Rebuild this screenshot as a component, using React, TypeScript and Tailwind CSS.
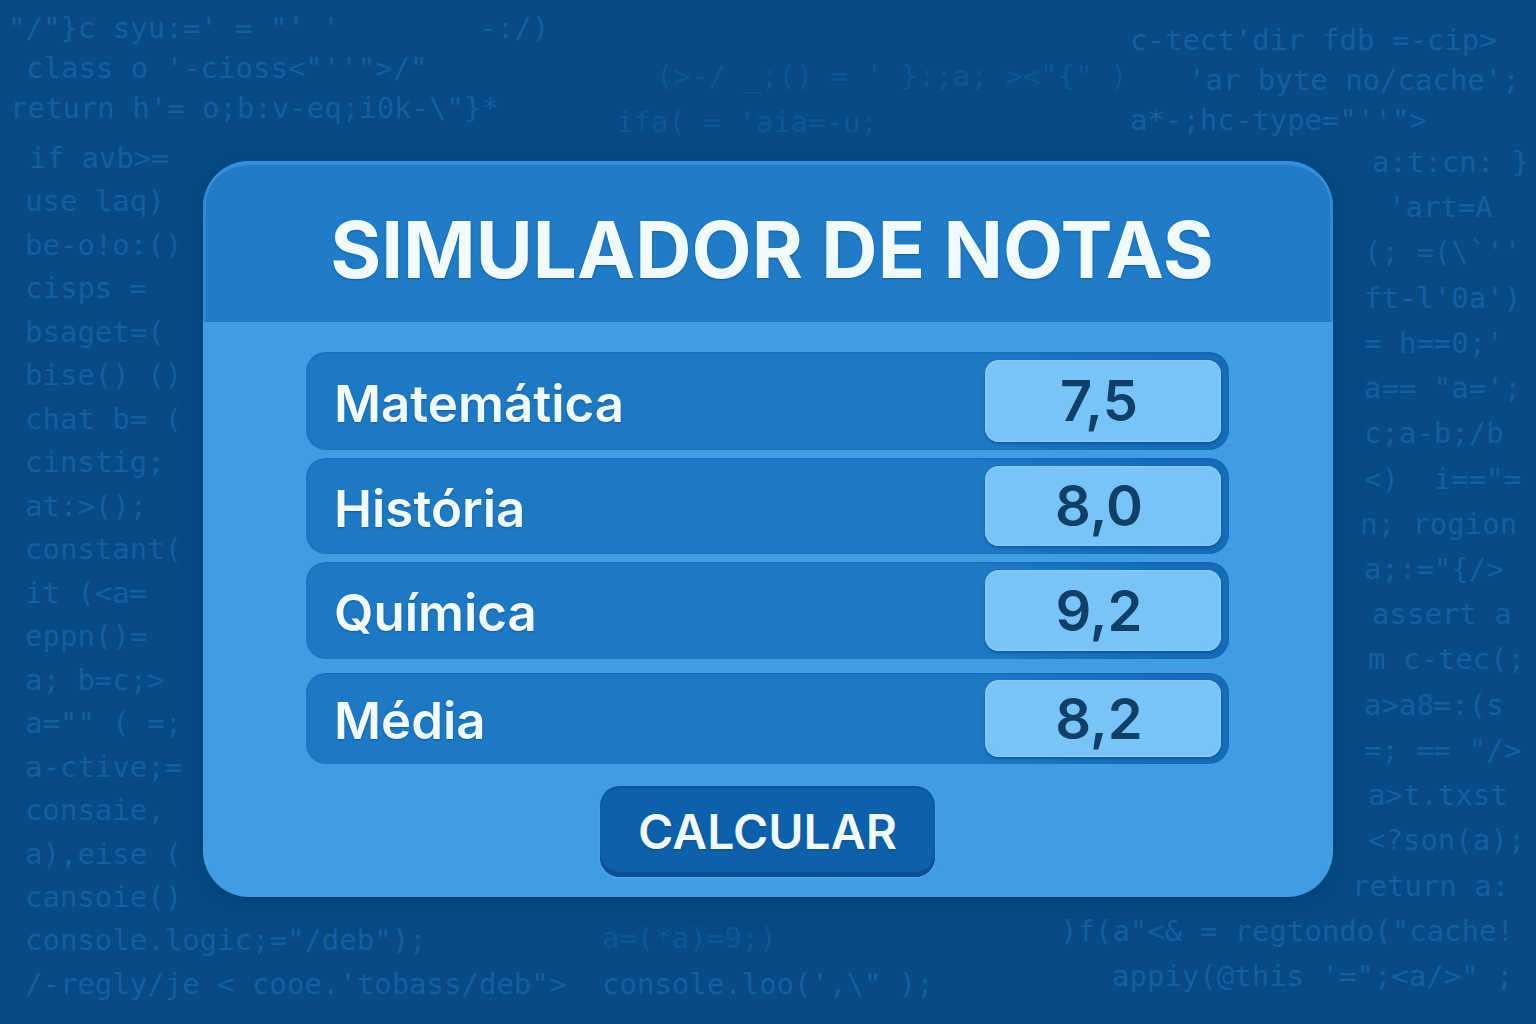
import { useState } from "react";

type Line = { text: string; className?: string };

const topLeft: Line[] = [
  { text: `"/"}c syu:=' = "' '        -:/)`, className: "pl-2" },
  { text: `class o '-cioss<"''">/"`, className: "pl-[26px]" },
  { text: `return h'= o;b:v-eq;i0k-\\"}*`, className: "pl-2.5" },
];

const left: Line[] = [
  { text: "if avb>=", className: "pl-1" },
  { text: "use laq)" },
  { text: "be-o!o:()" },
  { text: "cisps =" },
  { text: "bsaget=(" },
  { text: "bise() ()" },
  { text: "chat b= (" },
  { text: "cinstig;" },
  { text: "at:>();" },
  { text: "constant(" },
  { text: "it (<a=" },
  { text: "eppn()=" },
  { text: "a; b=c;>" },
  { text: `a="" ( =;` },
  { text: "a-ctive;=" },
  { text: "consaie," },
  { text: "a),eise (" },
  { text: "cansoie()" },
  { text: `console.logic;="/deb");` },
  { text: `/-regly/je < cooe.'tobass/deb">` },
];

const topMiddle: Line[] = [
  { text: `(>-/ _;() = ' }:;a; ><"{" )`, className: "pl-[54px]" },
  { text: "ifa( = 'aia=-u;", className: "pl-[14px]" },
];

const bottomMiddle: Line[] = [
  { text: "a=(*a)=9;)", className: "opacity-60" },
  { text: `console.loo(',\\" );` },
];

const topRight: Line[] = [
  { text: "c-tect'dir fdb =-cip>", className: "pl-[70px]" },
  { text: "'ar byte no/cache';", className: "pl-32" },
  { text: `a*-;hc-type="''">`, className: "pl-[70px]" },
];

const right: Line[] = [
  { text: "a:t:cn: }", className: "pl-[312px]" },
  { text: "'art=A", className: "pl-[328px]" },
  { text: "(; =(\\`''", className: "pl-[304px]" },
  { text: "ft-l'0a')", className: "pl-[304px]" },
  { text: "= h==0;'", className: "pl-[304px]" },
  { text: `a== "a=';`, className: "pl-[304px]" },
  { text: "c;a-b;/b", className: "pl-[304px]" },
  { text: `<)  i=="=`, className: "pl-[304px]" },
  { text: "n; rogion", className: "pl-[300px]" },
  { text: `a;:="{/>`, className: "pl-[304px]" },
  { text: "assert a", className: "pl-[312px]" },
  { text: "m c-tec(;", className: "pl-[308px]" },
  { text: "a>a8=:(s", className: "pl-[304px]" },
  { text: `=; == "/>`, className: "pl-[304px]" },
  { text: "a>t.txst", className: "pl-[308px]" },
  { text: "<?son(a);", className: "pl-[308px]" },
  { text: "return a:", className: "pl-[292px]" },
  { text: `)f(a"<& = regtondo("cache!` },
  { text: `appiy(@this '=";<a/>" ;`, className: "pl-[52px]" },
];

function Lines({ lines, className }: { lines: Line[]; className: string }) {
  return (
    <div className={`flex flex-col whitespace-pre ${className}`}>
      {lines.map((line, i) => (
        <span key={i} className={line.className}>
          {line.text}
        </span>
      ))}
    </div>
  );
}

function CodeBackdrop() {
  return (
    <div
      aria-hidden="true"
      className="absolute inset-0 grid grid-cols-[602fr_458fr_476fr] overflow-hidden font-['DejaVu_Sans_Mono',monospace] text-[29px] leading-10 text-[#165f9e] select-none"
    >
      <div className="flex min-w-0 flex-col pt-2 pb-5">
        <Lines lines={topLeft} className="pb-2.5" />
        <Lines lines={left} className="flex-1 justify-between pl-[25px]" />
      </div>
      <div className="flex min-w-0 flex-col justify-between pt-14 pb-5">
        <Lines lines={topMiddle} className="gap-1.5 opacity-60" />
        <Lines lines={bottomMiddle} className="gap-1.5" />
      </div>
      <div className="flex min-w-0 flex-col pt-5 pb-7">
        <Lines lines={topRight} className="pb-0.5" />
        <Lines lines={right} className="flex-1 justify-between" />
      </div>
    </div>
  );
}

const textShadow = "[text-shadow:0_1px_2px_rgba(8,70,130,0.6)]";

type RowProps = {
  id: string;
  label: string;
  value: string;
  size: string;
  onChange?: (value: string) => void;
};

function GradeRow({ id, label, value, size, onChange }: RowProps) {
  return (
    <div
      className={`flex items-center justify-between rounded-[20px] bg-linear-to-r from-[#1e79c5] from-72% to-[#166cb8] to-95% pr-2 pl-7 shadow-[inset_0_1px_2px_rgba(10,90,165,0.4)] ${size}`}
    >
      <label
        htmlFor={id}
        className={`pt-1 text-[51px] leading-none font-semibold text-[#f0faff] ${textShadow}`}
      >
        {label}
      </label>
      <input
        id={id}
        value={value}
        readOnly={!onChange}
        inputMode="decimal"
        onChange={(e) => onChange?.(e.target.value)}
        className="h-[84%] w-[236px] rounded-[14px] bg-[#78c3f8] pr-2 text-center text-[56px] leading-none font-semibold text-[#103f68] shadow-[inset_0_0_2px_1px_rgba(150,214,255,0.7),0_2px_3px_rgba(5,75,145,0.6)] outline-none"
      />
    </div>
  );
}

const parse = (s: string) => Number(s.replace(",", ".")) || 0;

export default function App() {
  const [math, setMath] = useState("7,5");
  const [history, setHistory] = useState("8,0");
  const [chemistry, setChemistry] = useState("9,2");
  const [average, setAverage] = useState("8,2");

  const calculate = () => {
    const mean = (parse(math) + parse(history) + parse(chemistry)) / 3;
    setAverage(mean.toFixed(1).replace(".", ","));
  };

  return (
    <main className="relative flex min-h-screen flex-col items-center justify-center bg-[#064b86] pt-[34px] font-['Inter',sans-serif]">
      <CodeBackdrop />
      <section className="relative w-full max-w-[1130px] overflow-hidden rounded-[46px] bg-[#409de4] shadow-[0_4px_24px_4px_rgba(2,52,100,0.35)]">
        <header className="flex h-[161px] items-center justify-center rounded-t-[46px] bg-[#207cc8] pt-4 pl-2 shadow-[inset_0_4px_0_#338edb,inset_3px_0_0_#2d88d5,inset_-3px_0_0_#2d88d5]">
          <h1 className={`text-[78px] leading-none font-bold whitespace-nowrap text-[#f0faff] ${textShadow}`}>
            SIMULADOR DE NOTAS
          </h1>
        </header>
        <form
          className="flex flex-col items-center pt-[30px] pr-[104px] pb-5 pl-[103px]"
          onSubmit={(e) => {
            e.preventDefault();
            calculate();
          }}
        >
          <div className="flex w-full flex-col gap-2">
            <GradeRow id="matematica" label="Matemática" value={math} size="h-[98px]" onChange={setMath} />
            <GradeRow id="historia" label="História" value={history} size="h-[96px]" onChange={setHistory} />
            <GradeRow id="quimica" label="Química" value={chemistry} size="h-[97px]" onChange={setChemistry} />
            <GradeRow id="media" label="Média" value={average} size="mt-1.5 h-[91px]" />
          </div>
          <button
            type="submit"
            className={`mt-[22px] h-[91px] w-[335px] rounded-[20px] bg-[#0f60aa] text-[48px] leading-none font-semibold text-[#f0faff] shadow-[inset_0_-5px_0_#094f92,inset_0_2px_2px_rgba(5,75,145,0.6),0_1px_2px_rgba(110,190,245,0.6)] ${textShadow}`}
          >
            CALCULAR
          </button>
        </form>
      </section>
    </main>
  );
}
